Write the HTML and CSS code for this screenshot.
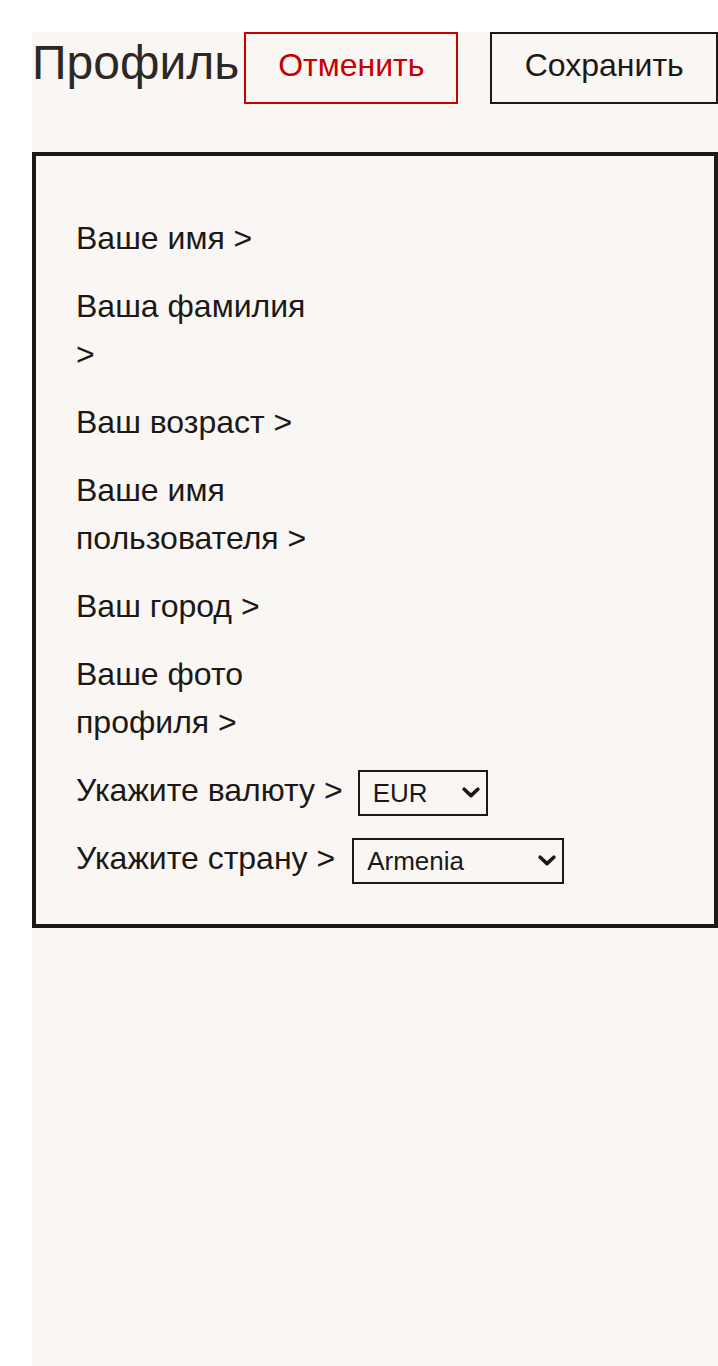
FILE: index.html
```html
<!DOCTYPE html>
<html lang="ru">
<head>
<meta charset="utf-8">
<title>Профиль</title>
<link rel="stylesheet" href="styles.css">
</head>
<body>
<div class="page">
  <header class="header">
    <h1 class="title">Профиль</h1>
    <button class="btn btn-cancel">Отменить</button>
    <button class="btn btn-save">Сохранить</button>
  </header>
  <section class="panel">
    <p class="item">Ваше имя &gt;</p>
    <p class="item">Ваша фамилия &gt;</p>
    <p class="item">Ваш возраст &gt;</p>
    <p class="item">Ваше имя пользователя &gt;</p>
    <p class="item">Ваш город &gt;</p>
    <p class="item">Ваше фото профиля &gt;</p>
    <div class="row">
      <span class="label">Укажите валюту &gt;</span>
      <span class="select-wrap select-currency">
        <select class="select">
          <option>EUR</option>
          <option>USD</option>
          <option>RUB</option>
        </select>
        <svg class="chevron" viewBox="0 0 18 11" aria-hidden="true"><path d="M2.2 2.2 L9 8.6 L15.8 2.2"/></svg>
      </span>
    </div>
    <div class="row">
      <span class="label">Укажите страну &gt;</span>
      <span class="select-wrap select-country">
        <select class="select">
          <option>Armenia</option>
          <option>Russia</option>
        </select>
        <svg class="chevron" viewBox="0 0 18 11" aria-hidden="true"><path d="M2.2 2.2 L9 8.6 L15.8 2.2"/></svg>
      </span>
    </div>
  </section>
</div>
</body>
</html>
```

FILE: styles.css
```css
html, body {
  margin: 0;
  padding: 0;
  background: #ffffff;
}

body {
  padding: 32px 0 0 32px;
  font-family: "Liberation Sans", Arial, sans-serif;
  color: #1b1918;
  overflow: hidden;
}

.page {
  background: #faf6f3;
  min-height: 1400px;
}

.header {
  display: flex;
  align-items: flex-start;
}

.title {
  margin: 3px 5px 0 0;
  font-size: 48px;
  font-weight: 400;
  line-height: normal;
  color: #2b2826;
}

.btn {
  font-family: "Liberation Sans", Arial, sans-serif;
  font-size: 32px;
  line-height: 36px;
  height: 72px;
  padding: 0 32px 6px 32px;
  background: transparent;
  border: 2px solid #1b1918;
  color: #1b1918;
  cursor: pointer;
  flex: none;
}

.btn-cancel {
  border-color: #c80000;
  color: #c80000;
  width: 214px;
}

.btn-save {
  margin-left: 32px;
  width: 228px;
}

.panel {
  margin-top: 48px;
  border: 4px solid #1b1816;
  padding: 58px 40px 42px 40px;
  display: flex;
  flex-direction: column;
  gap: 20px;
}

.item {
  margin: 0;
  font-size: 32px;
  line-height: 48px;
  max-width: 240px;
}

.row {
  display: flex;
  align-items: flex-start;
  font-size: 32px;
  line-height: 48px;
  height: 48px;
}

.label {
  white-space: nowrap;
}

.select-wrap {
  position: relative;
  display: block;
  height: 46px;
  margin-top: 4px;
}

.select {
  appearance: none;
  -webkit-appearance: none;
  display: block;
  width: 100%;
  height: 46px;
  font-family: "Liberation Sans", Arial, sans-serif;
  font-size: 26px;
  color: #1b1918;
  background: transparent;
  border: 2px solid #1b1918;
  border-radius: 0;
  padding: 0 30px 0 13px;
  margin: 0;
}

.chevron {
  position: absolute;
  right: 8px;
  top: 17px;
  width: 18px;
  height: 11px;
  pointer-events: none;
  fill: none;
  stroke: #1b1918;
  stroke-width: 3.6;
  stroke-linecap: round;
  stroke-linejoin: round;
}

.select-currency {
  margin-left: 15px;
  width: 130px;
}

.select-country {
  margin-left: 17px;
  width: 212px;
}
```
